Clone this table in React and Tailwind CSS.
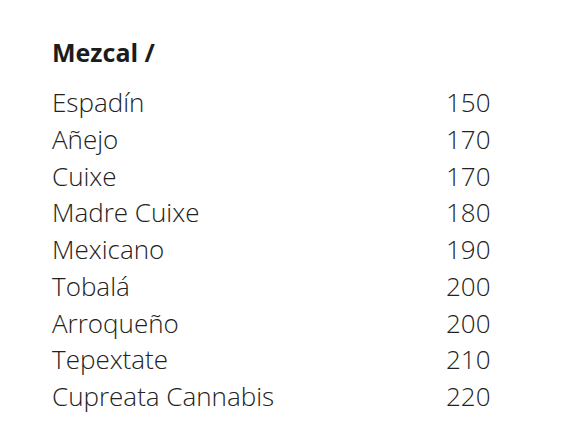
export default function App() {
  const items = [
    ["Espadín", "150"],
    ["Añejo", "170"],
    ["Cuixe", "170"],
    ["Madre Cuixe", "180"],
    ["Mexicano", "190"],
    ["Tobalá", "200"],
    ["Arroqueño", "200"],
    ["Tepextate", "210"],
    ["Cupreata Cannabis", "220"],
  ];
  return (
    <div className="w-[562px] h-[437px] bg-white pl-[52px] pt-[36px]" style={{ fontFamily: '"Open Sans", sans-serif' }}>
      <h1 className="text-[25px] leading-[32px] font-bold text-[#1c1c1c]">Mezcal /</h1>
      <div className="mt-[16px] flex flex-col">
        {items.map(([n, p]) => (
          <div key={n} className="flex h-[36.8px] items-center text-[26px] font-light text-[#222222]">
            <span className="w-[394px]">{n}</span>
            <span>{p}</span>
          </div>
        ))}
      </div>
    </div>
  );
}
